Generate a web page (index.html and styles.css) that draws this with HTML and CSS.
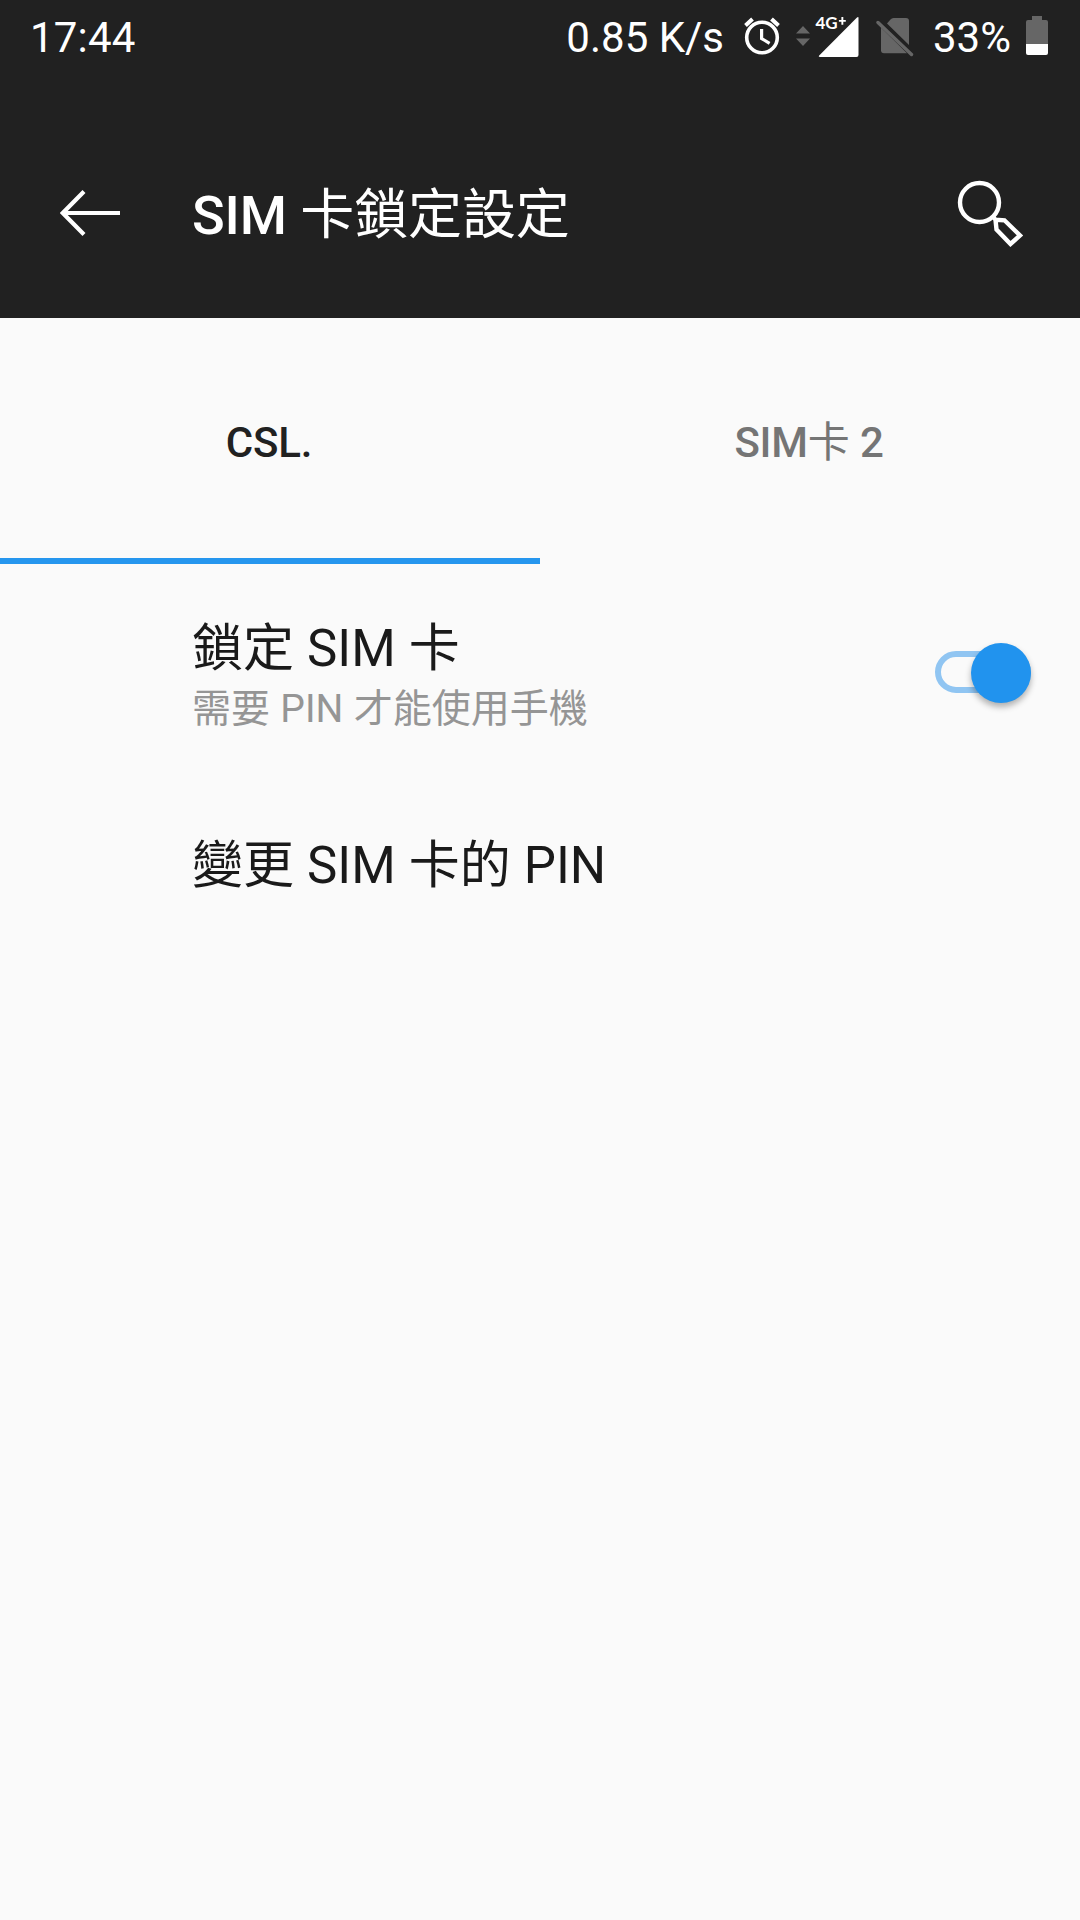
FILE: index.html
```html
<!DOCTYPE html>
<html lang="zh-Hant">
<head>
  <meta charset="UTF-8" />
  <meta name="viewport" content="width=device-width, initial-scale=1.0"/>
  <title>SIM 卡鎖定設定</title>
  <link rel="stylesheet" href="styles.css">
</head>
<body>
  <header class="header">
    <div class="status-bar">
      <span class="clock">17:44</span>
      <span class="speed">0.85 K/s</span>
      <svg class="icon-alarm" width="36" height="38" viewBox="0 0 36 38" fill="none" stroke="#fff">
        <circle cx="18" cy="20.5" r="15.3" stroke-width="3.6"/>
        <path d="M17.6 12v9.5l8 4.8" stroke-width="3.2"/>
        <path d="M1.5 8.5l7-6.5M34.5 8.5l-7-6.5" stroke-width="4"/>
      </svg>
      <svg class="icon-data" width="14" height="20" viewBox="0 0 14 20" fill="#666">
        <path d="M7 0l7 7.6H0zM7 20l7-7.6H0z"/>
      </svg>
      <svg class="icon-signal" width="44" height="42" viewBox="0 0 44 42" fill="#fff">
        <path d="M43.500 2v37q0 2-2 2H5q-2 0-.8-1.400L42 1.500q1.500-1.200 1.500.5z"/>
        <text class="network" x="0.5" y="13">4G</text>
        <path d="M23.900 3.900h2.500V1h1.900v2.900h2.500v1.900h-2.500v2.900h-1.900V5.800h-2.500z"/>
      </svg>
      <svg class="icon-nosim" width="38" height="40" viewBox="0 0 38 40" fill="#666">
        <path d="M11 5.500l3.500-4q1.200-1.500 3-1.500H30q3 0 3 3v24z"/>
        <path d="M5 9.500L31 35.300H8q-3 0-3-3z"/>
        <path d="M2 4.500l33.500 32" stroke="#666" stroke-width="3.400" stroke-linecap="round"/>
      </svg>
      <span class="percent">33%</span>
      <svg class="icon-battery" width="22" height="39" viewBox="0 0 22 39">
        <path d="M6 0h10v4h4q2 0 2 2v22H0V6q0-2 2-2h4z" fill="#666"/>
        <path d="M0 28h22v9q0 2-2 2H2q-2 0-2-2z" fill="#fff"/>
      </svg>
    </div>
    <div class="toolbar">
      <svg class="icon-back" width="60" height="46" viewBox="0 0 60 46" fill="none" stroke="#fff" stroke-width="4.200">
        <path d="M60 23H3M24 1.500L2.800 23 24 44.500"/>
      </svg>
      <h1 class="title">SIM <span class="cjk">卡鎖定設定</span></h1>
      <svg class="icon-search" width="68" height="68" viewBox="0 0 68 68" fill="none" stroke="#fff" stroke-width="4.400">
        <circle cx="23.500" cy="23.500" r="19.500"/>
        <path d="M37 37.500l3 4M39.500 40.800l9 .5 15.500 15.200-9.500 8.500-14-14.500z"/>
      </svg>
    </div>
  </header>

  <nav class="tabs">
    <div class="tab active">CSL.</div>
    <div class="tab">SIM<span class="cjk">卡</span> 2</div>
  </nav>

  <main class="settings">
    <div class="row">
      <div class="row-text">
        <div class="row-title">鎖定 SIM 卡</div>
        <div class="row-summary">需要 PIN 才能使用手機</div>
      </div>
      <div class="switch"><div class="knob"></div></div>
    </div>
    <div class="row single">
      <div class="row-title">變更 SIM 卡的 PIN</div>
    </div>
  </main>
</body>
</html>
```
FILE: styles.css
```css
* {
  box-sizing: border-box;
}

body {
  margin: 0;
  min-height: 1920px;
  background: #fafafa;
  color: #1a1a1a;
  font-family: Roboto, "Noto Sans CJK TC", sans-serif;
}

svg {
  display: block;
  flex: none;
}

.cjk {
  font-weight: 400;
}

.header {
  height: 318px;
  background: #212121;
  color: #fff;
}

.status-bar {
  display: flex;
  align-items: flex-start;
  height: 72px;
  padding: 16px 32px 0 30px;
  font-size: 42px;
  line-height: 44px;
  white-space: nowrap;
}

.clock {
  margin-right: auto;
  letter-spacing: 0.2px;
}

.icon-alarm {
  margin: 1px 16px 0 20px;
}

.icon-data {
  margin: 10px 5px 0 0;
}

.icon-signal {
  overflow: visible;
}

.network {
  font-family: Lato, sans-serif;
  font-size: 17px;
  font-weight: 700;
}

.icon-nosim {
  margin: 2px 19px 0 17px;
}

.icon-battery {
  margin-left: 15px;
}

.toolbar {
  display: flex;
  align-items: center;
  height: 246px;
  padding: 0 56px 0 60px;
}

.icon-back {
  margin-top: 36px;
}

.title {
  flex: 1;
  margin: 41px 0 0 72px;
  font-size: 54px;
  font-weight: 500;
  letter-spacing: -0.1px;
  line-height: 60px;
}

.icon-search {
  margin-top: 36px;
}

.tabs {
  display: flex;
  height: 246px;
}

.tab {
  flex: 1;
  padding-right: 2px;
  border-bottom: 6px solid transparent;
  color: #757575;
  font-size: 42px;
  font-weight: 500;
  letter-spacing: -0.2px;
  line-height: 249px;
  text-align: center;
}

.active {
  border-color: #2696ee;
  color: #212121;
}

.settings {
  padding: 0 49px 0 192px;
}

.row {
  display: flex;
  align-items: center;
  justify-content: space-between;
  height: 216px;
}

.single {
  height: 172px;
}

.row-text {
  padding-top: 14px;
}

.row-title {
  font-size: 51px;
  line-height: 60px;
  word-spacing: 0.4px;
}

.row-summary {
  color: #959595;
  font-size: 39px;
  line-height: 60px;
  word-spacing: 0.7px;
}

.switch {
  width: 96px;
  height: 42px;
  border: 6px solid #90c5f2;
  border-radius: 21px;
}

.knob {
  width: 60px;
  height: 60px;
  margin: -14.5px 0 0 29.5px;
  border-radius: 50%;
  background: #2193ee;
  box-shadow: 0 4px 6px rgba(0, 0, 0, 0.3);
}
```
